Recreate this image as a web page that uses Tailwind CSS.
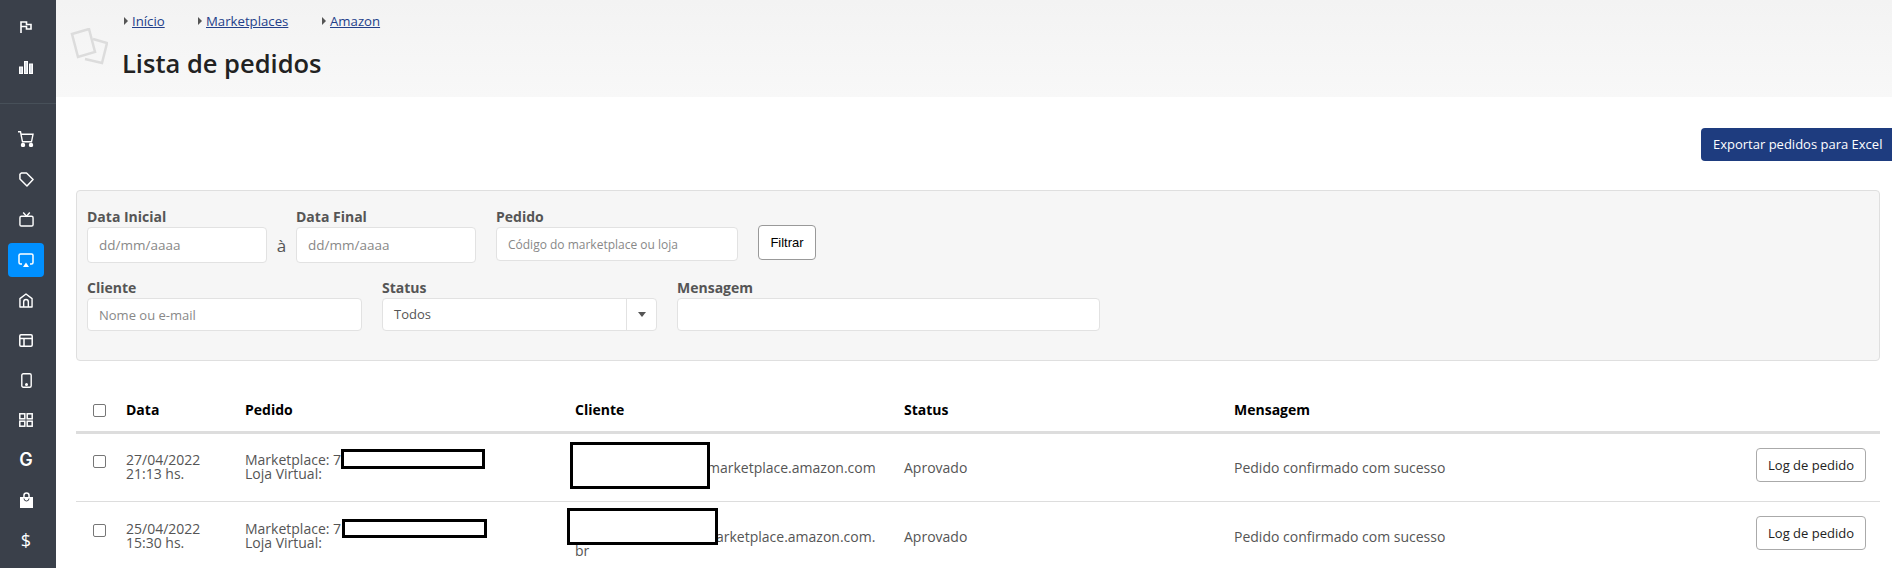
<!DOCTYPE html>
<html lang="pt-BR">
<head>
    <meta charset="UTF-8">
    <title>Lista de pedidos</title>
    <script src="https://cdn.jsdelivr.net/npm/@tailwindcss/browser@4"></script>
</head>
<body class="bg-white h-[568px] overflow-hidden font-['Open_Sans',sans-serif] text-[14px] text-[#555]">
<div class="flex h-[568px]">
    <!-- menu lateral -->
    <aside class="w-[56px] shrink-0 bg-[#3a404a] text-white flex flex-col">
        <div class="w-full h-[104px] pr-[4px] border-b border-[#475059] flex flex-col items-center pt-[21px] gap-[28px]">
            <svg class="w-[12px] h-[12px]" viewBox="0 0 12 12" fill="none" stroke="currentColor" stroke-width="1.600"><path d="M1 12V1h5.500v2.500H11v4.500H6.500V5.500H1"/></svg>
            <svg class="w-[14px] h-[13px]" viewBox="0 0 14 13" fill="#dfe3e8" stroke="currentColor" stroke-width="1"><rect x=".5" y="6" width="3" height="6.500"/><rect x="5.500" y=".5" width="3" height="12"/><rect x="10.500" y="3" width="3" height="9.500"/></svg>
        </div>
        <div class="w-full pr-[4px] flex flex-col items-center pt-[15px]">
            <div class="h-[40px] flex items-center justify-center"><svg class="w-[16px] h-[16px]" viewBox="0 0 16 16" fill="none" stroke="currentColor" stroke-width="1.400"><path d="M0 .8h2.500l2 10h9l1.500-7.500H3.200"/><circle cx="5" cy="14" r="1.500" fill="currentColor"/><circle cx="13" cy="14" r="1.500" fill="currentColor"/></svg></div>
            <div class="h-[40px] flex items-center justify-center"><svg class="w-[15px] h-[15px]" viewBox="0 0 16 16" fill="none" stroke="currentColor" stroke-width="1.600"><path d="M1 2.500 2.500 1H8l7 7-6.500 7L1 7.500z" stroke-linejoin="round"/></svg></div>
            <div class="h-[40px] flex items-center justify-center"><svg class="w-[15px] h-[15px]" viewBox="0 0 16 16" fill="none" stroke="currentColor" stroke-width="1.500"><rect x="1" y="4.500" width="14" height="10.500" rx="1.500"/><path d="M4.500 0.500 8 4.500l3.500-4"/></svg></div>
            <div class="w-[36px] h-[34px] mt-[4px] rounded-[4px] bg-[#0090ff] flex items-center justify-center"><svg class="w-[16px] h-[15px]" viewBox="0 0 16 15" fill="none" stroke="currentColor" stroke-width="1.500"><path d="M4 11H2.500A1.500 1.500 0 0 1 1 9.500v-7A1.500 1.500 0 0 1 2.500 1h11A1.500 1.500 0 0 1 15 2.500v7a1.500 1.500 0 0 1-1.500 1.500H12"/><path d="M8 9.500 11 14H5z" fill="currentColor" stroke="none"/></svg></div>
            <div class="h-[40px] mt-[3px] flex items-center justify-center"><svg class="w-[14px] h-[15px]" viewBox="0 0 15 16" fill="none" stroke="currentColor" stroke-width="1.500"><path d="M1 15V6l6.500-5L14 6v9z" stroke-linejoin="round"/><path d="M5 15V9.500a2.500 2.500 0 0 1 5 0V15"/></svg></div>
            <div class="h-[40px] flex items-center justify-center"><svg class="w-[14px] h-[13px]" viewBox="0 0 14 13" fill="none" stroke="currentColor" stroke-width="1.500"><rect x=".8" y=".8" width="12.400" height="11.400" rx="1.200"/><path d="M1 4.500h12M5 4.500v8"/></svg></div>
            <div class="h-[40px] flex items-center justify-center"><svg class="w-[11px] h-[15px]" viewBox="0 0 11 15" fill="none" stroke="currentColor" stroke-width="1.400"><rect x=".8" y=".8" width="9.400" height="13.400" rx="1.500"/><circle cx="5.500" cy="11.500" r=".8" fill="currentColor"/></svg></div>
            <div class="h-[40px] flex items-center justify-center"><svg class="w-[14px] h-[14px]" viewBox="0 0 14 14" fill="none" stroke="currentColor" stroke-width="1.500"><rect x=".8" y=".8" width="5" height="5"/><rect x="8.200" y=".8" width="5" height="5"/><rect x=".8" y="8.200" width="5" height="5"/><rect x="8.200" y="8.200" width="5" height="5"/></svg></div>
            <div class="h-[40px] flex items-center justify-center font-['Inter',sans-serif] text-[18px] font-semibold leading-none">G</div>
            <div class="h-[40px] flex items-center justify-center"><svg class="w-[13px] h-[16px]" viewBox="0 0 13 16"><path fill="#fff" d="M0 5h3.200V3.500a3.300 3.300 0 0 1 6.600 0V5H13v11H0zM4.700 5h3.600V3.500a1.800 1.800 0 0 0-3.600 0z"/><path d="M4 6.500a2.500 2.500 0 0 0 5 0" fill="none" stroke="#3a404a" stroke-width="1"/></svg></div>
            <div class="h-[40px] flex items-center justify-center text-[18px] font-normal leading-none">$</div>
        </div>
    </aside>

    <main class="flex-1 min-w-0">
        <!-- cabecalho -->
        <header class="relative h-[97px] bg-gradient-to-b from-[#f3f3f3] to-[#f8f8f8] pl-[66px]">
            <svg class="absolute left-[14px] top-[28px] w-[38px] h-[38px]" viewBox="0 0 38 38" fill="none" stroke="#dcdcdc" stroke-width="2.500"><path d="M2 6 19 1l6 23-17 5z"/><path d="M23 11l14 4-5 20-17-4"/></svg>
            <nav class="flex pt-[12px] pl-[2px] h-[47px] text-[13.200px] leading-[18px] text-[#23408a]">
                <span class="w-[74px] h-[18px] flex items-center"><i class="mr-[4px] border-y-[4px] border-l-[4px] border-y-transparent border-l-[#555]"></i><a class="underline" href="#">Início</a></span>
                <span class="w-[124px] h-[18px] flex items-center"><i class="mr-[4px] border-y-[4px] border-l-[4px] border-y-transparent border-l-[#555]"></i><a class="underline" href="#">Marketplaces</a></span>
                <span class="h-[18px] flex items-center"><i class="mr-[4px] border-y-[4px] border-l-[4px] border-y-transparent border-l-[#555]"></i><a class="underline" href="#">Amazon</a></span>
            </nav>
            <h1 class="text-[25.500px] leading-[32px] font-semibold text-[#222]">Lista de pedidos</h1>
        </header>

        <div class="h-[93px] pt-[31px] flex justify-end">
            <button class="h-[33px] w-[191px] pl-[12px] text-left rounded-l-[4px] bg-[#1e3c7f] text-white text-[13px] whitespace-nowrap">Exportar pedidos para Excel</button>
        </div>

        <!-- filtros -->
        <form class="ml-[20px] mr-[12px] h-[171px] rounded-[4px] border border-[#dfdfdf] bg-[#f6f6f6] pl-[10px] pt-[16px]">
            <div class="flex items-start h-[71px]">
                <div class="w-[180px]">
                    <label class="block font-bold leading-[20px] text-[#555]">Data Inicial</label>
                    <input class="w-full h-[36px] rounded-[4px] border border-[#e2e2e2] bg-white px-[11px] text-[13.500px] placeholder:text-[#888]" placeholder="dd/mm/aaaa">
                </div>
                <span class="w-[29px] pt-[26px] text-center text-[17px]">à</span>
                <div class="w-[180px]">
                    <label class="block font-bold leading-[20px] text-[#555]">Data Final</label>
                    <input class="w-full h-[36px] rounded-[4px] border border-[#e2e2e2] bg-white px-[11px] text-[13.500px] placeholder:text-[#888]" placeholder="dd/mm/aaaa">
                </div>
                <div class="w-[242px] ml-[20px]">
                    <label class="block font-bold leading-[20px] text-[#555]">Pedido</label>
                    <input class="w-full h-[34px] rounded-[4px] border border-[#e2e2e2] bg-white px-[11px] text-[12px] placeholder:text-[#888]" placeholder="Código do marketplace ou loja">
                </div>
                <button type="button" class="ml-[20px] mt-[18px] w-[58px] h-[35px] rounded-[4px] border border-[#999] bg-white font-['Liberation_Sans',sans-serif] text-[13px] text-black">Filtrar</button>
            </div>
            <div class="flex items-start">
                <div class="w-[275px]">
                    <label class="block font-bold leading-[20px] text-[#555]">Cliente</label>
                    <input class="w-full h-[33px] rounded-[4px] border border-[#e2e2e2] bg-white px-[11px] text-[13px] placeholder:text-[#888]" placeholder="Nome ou e-mail">
                </div>
                <div class="w-[275px] ml-[20px]">
                    <label class="block font-bold leading-[20px] text-[#555]">Status</label>
                    <div class="h-[33px] rounded-[4px] border border-[#e2e2e2] bg-white flex items-center justify-between">
                        <span class="pl-[11px] text-[13px] text-[#555]">Todos</span>
                        <span class="w-[30px] h-full border-l border-[#e2e2e2] flex items-center justify-center"><i class="border-x-[4px] border-t-[5px] border-x-transparent border-t-[#555]"></i></span>
                    </div>
                </div>
                <div class="w-[423px] ml-[20px]">
                    <label class="block font-bold leading-[20px] text-[#555]">Mensagem</label>
                    <input class="w-full h-[33px] rounded-[4px] border border-[#e2e2e2] bg-white px-[11px] text-[13px]">
                </div>
            </div>
        </form>

        <!-- pedidos -->
        <section class="relative ml-[20px] mr-[12px] mt-[28px]">
            <div class="grid grid-cols-[50px_119px_330px_329px_330px_1fr_124px] items-center h-[45px] border-b-[3px] border-[#dddddd] font-bold text-black leading-[20px]">
                <span class="pl-[17px] flex"><i class="w-[13px] h-[13px] rounded-[2px] border border-[#767676] bg-white"></i></span>
                <span>Data</span><span>Pedido</span><span>Cliente</span><span>Status</span><span>Mensagem</span><span></span>
            </div>
            <div class="grid grid-cols-[50px_119px_330px_329px_330px_1fr_124px] items-center h-[68px] border-b border-[#dddddd] leading-[14px]">
                <span class="pl-[17px] flex -mt-[12px]"><i class="w-[13px] h-[13px] rounded-[2px] border border-[#767676] bg-white"></i></span>
                <span class="-mt-[2px]">27/04/2022<br>21:13 hs.</span>
                <span class="-mt-[2px]">Marketplace: 7<br>Loja Virtual:</span>
                <span class="pl-[132px]">marketplace.amazon.com</span>
                <span>Aprovado</span>
                <span>Pedido confirmado com sucesso</span>
                <span class="-mt-[6px]"><button class="w-[110px] h-[34px] rounded-[4px] border border-[#aaa] bg-white text-[13px] text-[#222]">Log de pedido</button></span>
            </div>
            <div class="grid grid-cols-[50px_119px_330px_329px_330px_1fr_124px] items-center h-[69px] leading-[14px]">
                <span class="pl-[17px] flex -mt-[12px]"><i class="w-[13px] h-[13px] rounded-[2px] border border-[#767676] bg-white"></i></span>
                <span class="-mt-[2px]">25/04/2022<br>15:30 hs.</span>
                <span class="-mt-[2px]">Marketplace: 7<br>Loja Virtual:</span>
                <span class="pt-[14px]"><i class="inline-block w-[141px]"></i>arketplace.amazon.com.<br>br</span>
                <span>Aprovado</span>
                <span>Pedido confirmado com sucesso</span>
                <span class="-mt-[8px]"><button class="w-[110px] h-[34px] rounded-[4px] border border-[#aaa] bg-white text-[13px] text-[#222]">Log de pedido</button></span>
            </div>
            <!-- tarjas por cima dos dados -->
            <div class="absolute left-[265px] top-[60px] w-[144px] h-[20px] border-[3px] border-black bg-white"></div>
            <div class="absolute left-[494px] top-[53px] w-[140px] h-[47px] border-[3px] border-black bg-white"></div>
            <div class="absolute left-[266px] top-[130px] w-[145px] h-[19px] border-[3px] border-black bg-white"></div>
            <div class="absolute left-[491px] top-[119px] w-[151px] h-[37px] border-[3px] border-black bg-white"></div>
        </section>
    </main>
</div>
</body>
</html>
